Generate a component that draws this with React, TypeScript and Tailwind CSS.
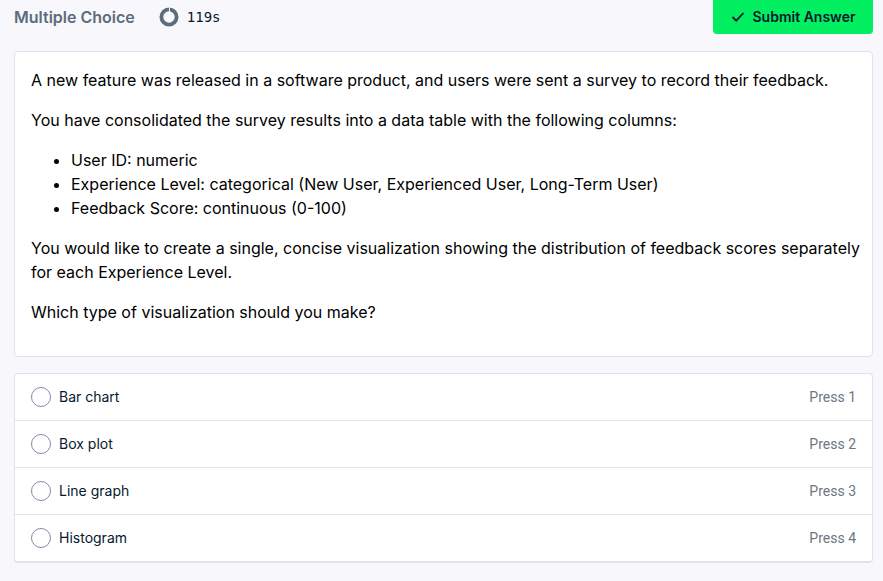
const columns = [
  'User ID: numeric',
  'Experience Level: categorical (New User, Experienced User, Long-Term User)',
  'Feedback Score: continuous (0-100)',
];

const options = ['Bar chart', 'Box plot', 'Line graph', 'Histogram'];

function TimerIcon() {
  return (
    <svg width="20" height="20" viewBox="0 0 20 20" fill="none" aria-hidden="true">
      <circle cx="10" cy="10" r="7.6" stroke="#5d6c7b" strokeWidth="3.8" />
      <path d="M10.5 0v5" stroke="#f7f7fc" strokeWidth="1" />
    </svg>
  );
}

function CheckIcon() {
  return (
    <svg width="14" height="12" viewBox="0 0 14 12" fill="none" aria-hidden="true">
      <path d="M1.5 6 5.2 9.7 12.5 2" stroke="#05192d" strokeWidth="1.8" />
    </svg>
  );
}

function Header() {
  return (
    <header className="flex h-[34px] items-center justify-between">
      <div className="flex items-center">
        <h1 className="text-base leading-5 font-semibold text-[#5d6c7b]">Multiple Choice</h1>
        <div className="ml-6 flex items-center gap-2">
          <TimerIcon />
          <span className="font-['DejaVu_Sans_Mono',monospace] text-sm text-[#05192d]">119s</span>
        </div>
      </div>
      <button
        type="button"
        className="flex h-full w-40 items-center justify-center gap-2 rounded-b bg-[#03ef62] text-sm font-semibold text-[#05192d]"
      >
        <CheckIcon />
        Submit Answer
      </button>
    </header>
  );
}

function Question() {
  return (
    <section className="mt-[17px] space-y-4 rounded border border-[#e1e1ea] bg-white pt-4 pr-2 pb-8 pl-4 text-base leading-6 text-black">
      <p>A new feature was released in a software product, and users were sent a survey to record their feedback.</p>
      <p>You have consolidated the survey results into a data table with the following columns:</p>
      <ul className="list-disc pl-10">
        {columns.map((column) => (
          <li key={column}>{column}</li>
        ))}
      </ul>
      <p>
        You would like to create a single, concise visualization showing the distribution of feedback scores separately
        for each Experience Level.
      </p>
      <p>Which type of visualization should you make?</p>
    </section>
  );
}

function Options() {
  return (
    <div className="mt-4 rounded border border-b-2 border-[#e1e1ea] bg-white" role="radiogroup" aria-label="Answers">
      {options.map((option, index) => (
        <label
          key={option}
          className="flex h-[47px] items-center border-b border-[#e1e1ea] px-4 text-sm text-[#05192d] last:h-[46px] last:border-b-0"
        >
          <input
            type="radio"
            name="answer"
            value={option}
            className="mr-2 size-5 appearance-none rounded-full border border-[#8488a8] bg-white checked:border-[6px]"
          />
          <span className="flex-1">{option}</span>
          <span className="font-['Roboto',sans-serif] text-[#6b7784]">Press {index + 1}</span>
        </label>
      ))}
    </div>
  );
}

export default function App() {
  return (
    <main className="min-h-screen bg-[#f7f7fc] pr-[10px] pl-[14px] font-['Inter',sans-serif]">
      <Header />
      <Question />
      <Options />
    </main>
  );
}
